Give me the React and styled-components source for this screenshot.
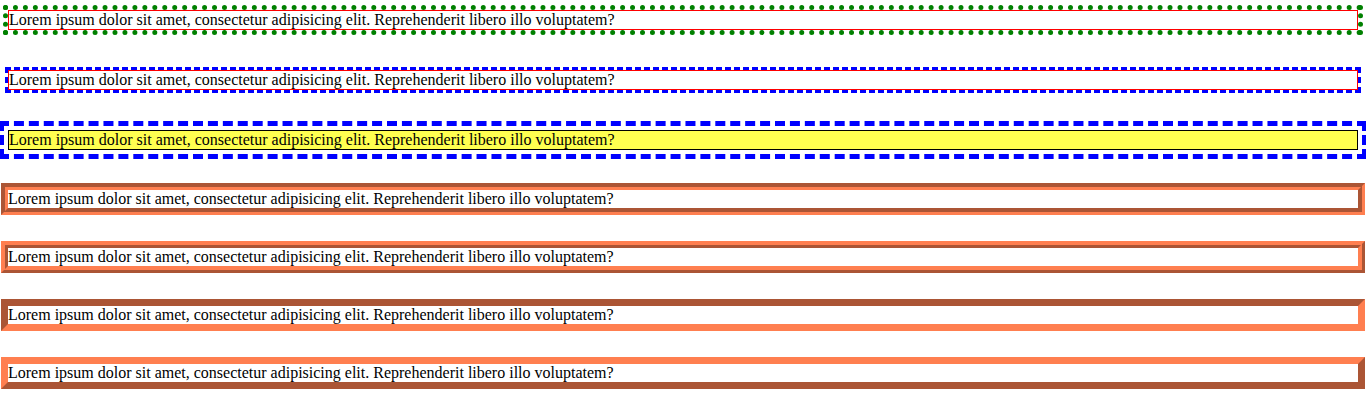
import React from "react";
import styled, { createGlobalStyle, css } from "styled-components";

const GlobalStyle = createGlobalStyle`
  html, body {
    margin: 0;
    padding: 0;
    background: #fff;
  }
  body {
    font-family: "Liberation Serif", "Times New Roman", serif;
    font-size: 16px;
    color: #000;
    overflow: hidden;
  }
`;

const text =
  "Lorem ipsum dolor sit amet, consectetur adipisicing elit. Reprehenderit libero illo voluptatem?";

// one look per outline style shown in the demo
const variants = {
  dotted: css`
    border: 1px solid red;
    outline: 5px dotted green;
  `,
  dashed: css`
    border: 1px solid red;
    outline: 3px dashed blue;
  `,
  highlight: css`
    border: 1px solid #000;
    background: #ffff50;
    outline: 5px dashed blue;
    outline-offset: 4px;
  `,
  groove: css`
    outline: 7px groove coral;
  `,
  ridge: css`
    outline: 7px ridge coral;
  `,
  inset: css`
    outline: 7px inset coral;
  `,
  outset: css`
    outline: 7px outset coral;
  `,
};

const order = ["dotted", "dashed", "highlight", "groove", "ridge", "inset", "outset"];

const App = () => {
  return (
    <>
      <GlobalStyle />
      <Page>
        {order.map((v) => (
          <OutlineBox key={v} variant={v}>
            {text}
          </OutlineBox>
        ))}
      </Page>
    </>
  );
};

export default App;

const Page = styled.div`
  display: flex;
  flex-direction: column;
  gap: 40px;
  padding: 10px 8px;
`;

const OutlineBox = styled.div.withConfig({
  shouldForwardProp: (prop) => prop !== "variant",
})`
  line-height: 18px;
  ${({ variant }) => variants[variant]}
`;
